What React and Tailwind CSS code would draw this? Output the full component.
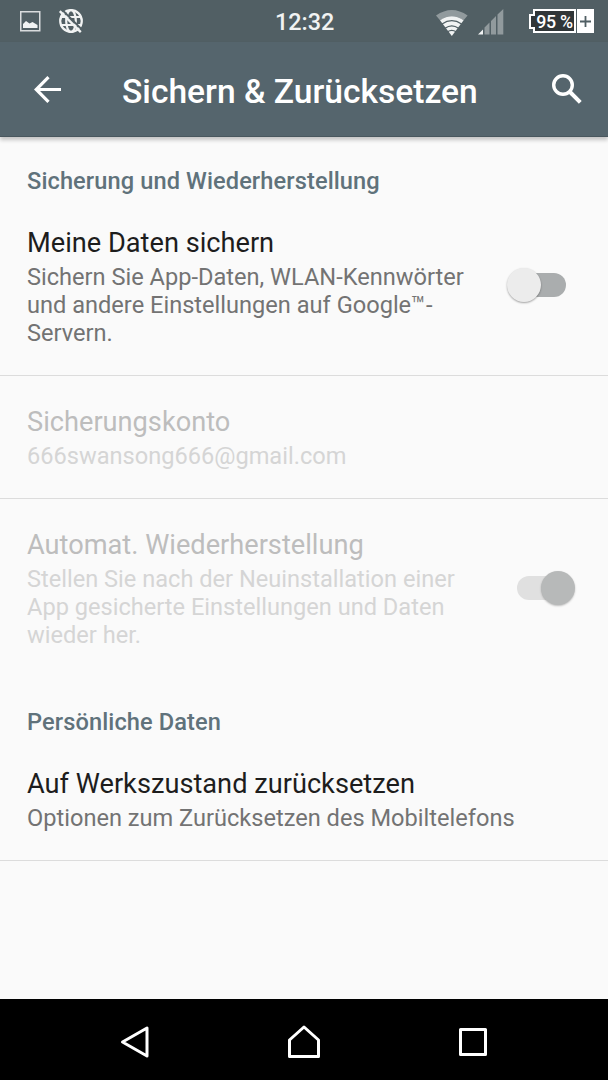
function StatusBar() {
  return (
    <header className="flex h-[42px] items-center bg-[#515f64] text-[#f1f3f3]">
      <div className="flex w-[275px] items-center pl-5">
        <svg width="21" height="21" viewBox="0 0 21 21" className="mr-[17px]">
          <rect x="0.75" y="0.75" width="19" height="19" fill="none" stroke="#d9dcdd" strokeWidth="1.5" />
          <path d="M3 17v-4l3-3 3.500 2.500 3-1.500 2.500 1.500 2.500 1.500v3z" fill="currentColor" />
        </svg>
        <svg width="26" height="26" viewBox="0 0 26 26" fill="none" stroke="currentColor" strokeWidth="2.2">
          <circle cx="13" cy="13" r="10.800" />
          <ellipse cx="13" cy="13" rx="4.800" ry="11" />
          <path d="M3 9h20M3 17h20" />
          <path d="M3.800 1.500l21 21" stroke="#515f64" strokeWidth="1.800" />
          <path d="M1.800 3.200l21 21" strokeWidth="2.4" />
        </svg>
      </div>

      <span className="w-[160px] text-[23.4px] font-medium leading-[28px] pt-[2px]">12:32</span>

      <svg width="34" height="28" viewBox="0 0 34 28" className="mt-[3px]">
        <path d="M1 6.500Q16.800 -4.500 32.600 6.500L28.600 11.200Q16.800 3.300 5 11.200z" fill="#919a9d" />
        <path d="M5 11.200Q16.800 3.300 28.600 11.200L16.800 27z" fill="currentColor" />
        <path d="M7 15Q16.800 8.300 26.600 15M10 19.300Q16.800 14.500 23.600 19.300M12.500 22.800Q16.800 20 21.100 22.800" fill="none" stroke="#515f64" strokeWidth="1.300" />
      </svg>

      <svg width="27" height="27" viewBox="0 0 27 27" fill="#919a9d" className="ml-[9px] mt-[2px]">
        <path d="M0 25.500l5-5v5z" fill="#f1f3f3" />
        <path d="M6.500 18.500l5-5v12h-5zM13 12l5-5v18.500h-5zM19.500 5.500L25.300 0v25.500h-5.800z" />
      </svg>

      <div className="ml-[24px] flex h-[24px] items-center">
        <div className="z-10 -mr-[2px] h-[15px] w-[6px] border-2 border-r-0 border-white bg-[#303638]" />
        <div className="flex h-[24px] w-[43px] items-center justify-center border-2 border-white bg-[#303638] pt-[2px] text-[17.8px] font-medium leading-none tracking-[-0.3px] text-white">
          <span className="whitespace-nowrap">95 %</span>
        </div>
        <div className="ml-px flex h-[24px] w-[17px] items-center justify-center bg-white">
          <svg width="11" height="11" viewBox="0 0 11 11" stroke="#515f64" strokeWidth="1.800">
            <path d="M5.500 0v11M0 5.500h11" />
          </svg>
        </div>
      </div>
    </header>
  );
}

function Toolbar() {
  return (
    <div className="flex h-[95px] items-center border-b border-[#49575e] bg-[#55656d] text-white shadow-[0_3px_4px_rgba(0,0,0,0.22)]">
      <svg width="27" height="27" viewBox="0 0 27 27" fill="none" stroke="currentColor" strokeWidth="3.200" className="ml-[34px]">
        <path d="M27 13.500H2.500M14.500 1.200L2.200 13.500l12.300 12.300" />
      </svg>
      <h1 className="ml-[61px] w-[430px] whitespace-nowrap pt-[6px] text-[33.6px] font-medium leading-[40px]">Sichern & Zurücksetzen</h1>
      <svg width="30" height="30" viewBox="0 0 30 30" fill="none" stroke="currentColor" className="shrink-0">
        <circle cx="11" cy="11" r="9.300" strokeWidth="3.400" />
        <path d="M17.500 17.500l10.800 10.800" strokeWidth="4" />
      </svg>
    </div>
  );
}

function Category({ children }) {
  return (
    <h2 className="px-[27px] pb-[31px] pt-[30px] text-[23.6px] font-medium leading-[28px] tracking-[0.1px] text-[#60727b]">
      {children}
    </h2>
  );
}

function Preference({ title, summary, disabled, divider = true, first, children }) {
  return (
    <div
      className={`flex items-center border-b pl-[27px] pb-[28px] ${first ? "" : "pt-[29px]"} ${
        divider ? "border-[#dcdcdc]" : "border-transparent"
      }`}
    >
      <div className="flex-1">
        <h3 className={`text-[27.2px] leading-[34px] ${disabled ? "text-[#bdbdbd]" : "text-[#1d1d1d]"}`}>{title}</h3>
        <p className={`mt-[3px] whitespace-pre-line text-[23.6px] leading-[28px] ${disabled ? "text-[#d5d5d5]" : "text-[#737373]"}`}>
          {summary}
        </p>
      </div>
      {children}
    </div>
  );
}

export default function App() {
  return (
    <div className="flex h-[1080px] w-[608px] flex-col overflow-hidden bg-[#fafafa] font-[Roboto,sans-serif]">
      <StatusBar />
      <Toolbar />

      <main className="flex-1">
        <Category>Sicherung und Wiederherstellung</Category>
        <Preference
          first
          title="Meine Daten sichern"
          summary={"Sichern Sie App-Daten, WLAN-Kennwörter\nund andere Einstellungen auf Google™-\nServern."}
        >
          {/* Off */}
          <div className="mr-[42px] mt-[-3px] flex items-center">
            <div className="z-10 size-[34px] rounded-full bg-[#ececec] shadow-[0_1px_2px_rgba(0,0,0,0.35)]" />
            <div className="-ml-[17px] h-[24px] w-[42px] rounded-full bg-[#aaadae]" />
          </div>
        </Preference>
        <Preference disabled title="Sicherungskonto" summary="666swansong666@gmail.com" />
        <Preference
          disabled
          divider={false}
          title="Automat. Wiederherstellung"
          summary={"Stellen Sie nach der Neuinstallation einer\nApp gesicherte Einstellungen und Daten\nwieder her."}
        >
          {/* On */}
          <div className="mr-[33px] mt-[-2px] flex items-center">
            <div className="-mr-[17px] h-[24px] w-[41px] rounded-full bg-[#e0e0e0]" />
            <div className="z-10 size-[34px] rounded-full bg-[#b7b9b9] shadow-[0_1px_2px_rgba(0,0,0,0.25)]" />
          </div>
        </Preference>

        <Category>Persönliche Daten</Category>
        <Preference first title="Auf Werkszustand zurücksetzen" summary="Optionen zum Zurücksetzen des Mobiltelefons" />
      </main>

      <nav className="flex h-[81px] items-center bg-black pt-[5px]">
        <svg width="30" height="34" viewBox="0 0 30 34" fill="none" stroke="white" strokeWidth="3" strokeLinejoin="round" className="ml-[120px]">
          <path d="M27 3v28L2.500 17z" />
        </svg>
        <svg width="34" height="34" viewBox="0 0 34 34" fill="none" stroke="white" strokeWidth="3" strokeLinejoin="round" className="ml-[137px]">
          <path d="M2.500 31.500V15L17 2l14.500 13v16.500z" />
        </svg>
        <svg width="28" height="28" viewBox="0 0 28 28" fill="none" stroke="white" strokeWidth="3" strokeLinejoin="round" className="ml-[138px]">
          <rect x="1.500" y="1.500" width="25" height="25" />
        </svg>
      </nav>
    </div>
  );
}
